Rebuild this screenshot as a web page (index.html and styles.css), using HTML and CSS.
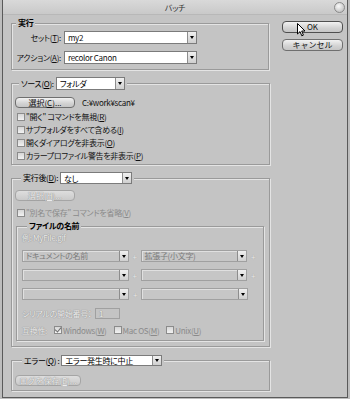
FILE: index.html
```html
<!DOCTYPE html>
<html lang="ja">
<head>
    <meta charset="UTF-8">
    <title>バッチ</title>
    <link rel="stylesheet" href="styles.css">
</head>
<body>

<div class="window">
    <!-- タイトルバー -->
    <div class="titlebar">
        <span class="title">バッチ</span>
        <span class="close"></span>
    </div>

    <div class="content">
        <div class="main">
            <!-- 実行 -->
            <fieldset class="group run">
                <legend>実行</legend>
                <div class="field">
                    <label>セット(<u>T</u>):</label>
                    <div class="select set"><span class="value">my2</span><span class="arrow"></span></div>
                </div>
                <div class="field">
                    <label>アクション(<u>A</u>):</label>
                    <div class="select set"><span class="value">recolor Canon</span><span class="arrow"></span></div>
                </div>
            </fieldset>

            <!-- ソース -->
            <fieldset class="group source">
                <legend>
                    <span class="legend-label">ソース(<u>O</u>):</span>
                    <div class="select source-select"><span class="value">フォルダ</span><span class="arrow"></span></div>
                </legend>
                <div class="pick">
                    <button class="btn small">選択(<u>C</u>)...</button>
                    <span class="path">C:¥work¥scan¥</span>
                </div>
                <div class="checks">
                    <div class="check"><span class="box"></span>"開く" コマンドを無視(<u>R</u>)</div>
                    <div class="check"><span class="box"></span>サブフォルダをすべて含める(<u>I</u>)</div>
                    <div class="check"><span class="box"></span>開くダイアログを非表示(<u>O</u>)</div>
                    <div class="check"><span class="box"></span>カラープロファイル警告を非表示(<u>P</u>)</div>
                </div>
            </fieldset>

            <!-- 実行後 -->
            <fieldset class="group dest">
                <legend>
                    <span class="legend-label">実行後(<u>D</u>):</span>
                    <div class="select dest-select"><span class="value">なし</span><span class="arrow"></span></div>
                </legend>
                <button class="btn small disabled">選択(<u>H</u>)...</button>
                <div class="check disabled save-as"><span class="box"></span>"別名で保存" コマンドを省略(<u>V</u>)</div>

                <fieldset class="group naming">
                    <legend>ファイルの名前</legend>
                    <div class="example">例: MyFile.gif</div>
                    <div class="name-row">
                        <div class="select off"><span class="value">ドキュメントの名前</span><span class="arrow"></span></div>
                        <span class="plus">+</span>
                        <div class="select off"><span class="value">拡張子(小文字)</span><span class="arrow"></span></div>
                        <span class="plus">+</span>
                    </div>
                    <div class="name-row">
                        <div class="select off"><span class="value"></span><span class="arrow"></span></div>
                        <span class="plus">+</span>
                        <div class="select off"><span class="value"></span><span class="arrow"></span></div>
                        <span class="plus">+</span>
                    </div>
                    <div class="name-row">
                        <div class="select off"><span class="value"></span><span class="arrow"></span></div>
                        <span class="plus">+</span>
                        <div class="select off"><span class="value"></span><span class="arrow"></span></div>
                    </div>
                    <div class="serial">
                        <span class="faint">シリアルの開始番号：</span>
                        <span class="num">1</span>
                    </div>
                    <div class="compat">
                        <span class="faint">互換性:</span>
                        <span class="check disabled"><span class="box checked"></span>Windows(<u>W</u>)</span>
                        <span class="check disabled"><span class="box"></span>Mac OS(<u>M</u>)</span>
                        <span class="check disabled"><span class="box"></span>Unix(<u>U</u>)</span>
                    </div>
                </fieldset>
            </fieldset>

            <!-- エラー -->
            <fieldset class="group error">
                <legend>
                    <span class="legend-label">エラー(<u>Q</u>) :</span>
                    <div class="select error-select"><span class="value">エラー発生時に中止</span><span class="arrow"></span></div>
                </legend>
                <button class="btn small log disabled">ログを保存(<u>E</u>)...</button>
            </fieldset>
        </div>

        <div class="side">
            <button class="btn default">OK
                <svg class="cursor" width="9" height="14" viewBox="0 0 9 14">
                    <path d="M0.5 0.5 L0.5 11 L3 8.6 L4.8 12.8 L6.4 12.1 L4.7 8 L8 8 Z" fill="#fff" stroke="#000" stroke-width="1"/>
                </svg>
            </button>
            <button class="btn">キャンセル</button>
        </div>
    </div>
</div>

</body>
</html>
```

FILE: styles.css
```css
* {
    box-sizing: border-box;
}

body {
    margin: 0;
    background-color: #bdbdbd;
    font-family: "Noto Sans CJK JP", "Noto Sans", sans-serif;
    font-size: 8px;
    font-feature-settings: "palt";
    letter-spacing: -0.3px;
    color: #111;
}

u {
    text-decoration: underline;
    text-underline-offset: 1px;
}

.window {
    position: relative;
    margin-left: 2px;
    width: 346px;
    height: 398px;
    border: 1px solid #5a5a5a;
    border-top: none;
    background-color: #c4c4c4;
}

/* タイトルバー */
.titlebar {
    height: 15px;
    display: flex;
    align-items: center;
    justify-content: center;
    background: linear-gradient(#d9d9d9, #c9c9c9);
    border-bottom: 1px solid #b8b8b8;
}

.title {
    font-size: 8px;
    color: #333;
}

.close {
    position: absolute;
    right: 2px;
    top: 2px;
    width: 11px;
    height: 11px;
    border-radius: 50%;
    border: 1px solid #8a8a8a;
    background: radial-gradient(circle at 40% 35%, #fafafa, #c8c8c8 70%);
}

.content {
    display: flex;
    padding: 3px 0 0 8px;
}

.main {
    width: 259px;
}

.side {
    display: flex;
    flex-direction: column;
    gap: 6px;
    margin-left: 12px;
    padding-top: 3px;
}

/* グループ枠 */
.group {
    margin: 0;
    min-width: 0;
    padding: 3px 4px 5px 4px;
    border: 1px solid #9a9a9a;
    box-shadow: inset 1px 1px 0 #e4e4e4, 1px 1px 0 #e4e4e4;
}

.group legend {
    display: flex;
    align-items: center;
    padding: 0 2px;
    line-height: 10px;
    background-color: #c4c4c4;
    color: #000;
}

.run {
    width: 258px;
}

.run legend {
    font-weight: bold;
}

.field {
    display: flex;
    align-items: center;
    height: 13px;
}

.field + .field {
    margin-top: 7px;
}

.field label {
    width: 45px;
    margin-right: 3px;
    text-align: right;
    white-space: nowrap;
}

/* プルダウン */
.select {
    display: flex;
    height: 13px;
    border: 1px solid #7b7b7b;
    background-color: #fff;
}

.select .value {
    flex: 1;
    padding-left: 3px;
    line-height: 11px;
    white-space: nowrap;
    overflow: hidden;
}

.select .arrow {
    width: 9px;
    display: flex;
    align-items: center;
    justify-content: center;
    border-left: 1px solid #8d8d8d;
    background: linear-gradient(#f0f0f0, #cfcfcf);
}

.select .arrow::before {
    content: "";
    border-left: 2.5px solid transparent;
    border-right: 2.5px solid transparent;
    border-top: 3px solid #000;
}

.set {
    width: 133px;
}

.legend-label {
    margin-right: 2px;
    white-space: nowrap;
}

.source {
    margin-top: 7px;
    padding-top: 7px;
    padding-bottom: 2px;
}

.source legend {
    margin-left: 3px;
}

.source-select {
    width: 69px;
}

.dest {
    margin-top: 7px;
    padding-top: 6px;
    padding-bottom: 5px;
}

.dest legend {
    margin-left: 5px;
}

.dest-select {
    width: 72px;
    height: 12px;
}

.error {
    margin-top: 8px;
    padding-top: 9px;
    padding-bottom: 4px;
}

.error legend {
    margin-left: 6px;
}

.error-select {
    width: 101px;
    height: 11px;
}

.error-select .value {
    line-height: 9px;
}

/* ボタン */
.btn {
    position: relative;
    height: 12px;
    width: 61px;
    padding: 0;
    font-family: inherit;
    font-size: 8px;
    line-height: 10px;
    color: #111;
    border: 1px solid #6f6f6f;
    border-radius: 4px;
    background: linear-gradient(#f2f2f2, #d2d2d2 60%, #c6c6c6);
}

.btn.default {
    border-color: #4f4f4f;
    font-weight: normal;
}

.btn.small {
    width: 60px;
    height: 11px;
    margin-left: -1px;
}

.btn.log {
    width: 66px;
}

.btn.disabled {
    color: #ececec;
    text-shadow: 0 0 1px #8c8c8c, 0 0 1px #8c8c8c;
    border-color: #a5a5a5;
    background: linear-gradient(#dedede, #cacaca);
}

.cursor {
    position: absolute;
    left: 14px;
    top: 1px;
}

.pick {
    display: flex;
    align-items: center;
    gap: 7px;
}

.checks {
    margin-top: 2px;
}

.check {
    display: flex;
    align-items: center;
    height: 13px;
    white-space: nowrap;
    margin-left: 1px;
}

.box {
    width: 8px;
    height: 8px;
    margin-right: 1px;
    border: 1px solid #8b8b8b;
    background: linear-gradient(#d6d6d6, #f2f2f2);
}

.box.checked {
    position: relative;
}

.box.checked::after {
    content: "";
    position: absolute;
    left: 1px;
    top: -1px;
    width: 3px;
    height: 5px;
    border-right: 1px solid #6d6d6d;
    border-bottom: 1px solid #6d6d6d;
    transform: rotate(40deg);
}

.check.disabled {
    color: #8a8a8a;
}

.save-as {
    margin-top: 5px;
}

/* ファイルの名前 */
.naming {
    margin-top: 2px;
    width: 248px;
    padding: 2px 4px 4px 5px;
}

.naming legend {
    font-weight: bold;
}

.example {
    height: 10px;
    line-height: 10px;
    color: #ececec;
    text-shadow: 0 0 1px #8c8c8c, 0 0 1px #8c8c8c;
}

.name-row {
    display: flex;
    align-items: center;
    margin-top: 7px;
    height: 12px;
}

.select.off {
    width: 107px;
    height: 12px;
    background-color: #c6c6c6;
    border-color: #a0a0a0;
    box-shadow: inset 1px 1px 0 #e0e0e0;
    color: #7a7a7a;
}

.select.off .value {
    line-height: 10px;
}

.plus {
    width: 12px;
    text-align: center;
    color: #ececec;
    text-shadow: 0 0 1px #8c8c8c;
}

.serial {
    display: flex;
    align-items: center;
    gap: 6px;
    height: 11px;
    margin-top: 8px;
}

.faint {
    color: #ececec;
    text-shadow: 0 0 1px #8c8c8c, 0 0 1px #8c8c8c;
    white-space: nowrap;
}

.serial .faint {
    width: 67px;
}

.num {
    width: 25px;
    height: 11px;
    padding-left: 3px;
    line-height: 9px;
    border: 1px solid #a0a0a0;
    color: #ececec;
    text-shadow: 0 0 1px #8c8c8c, 0 0 1px #8c8c8c;
}

.compat {
    display: flex;
    align-items: center;
    height: 12px;
    margin-top: 5px;
    gap: 6px;
}
```
